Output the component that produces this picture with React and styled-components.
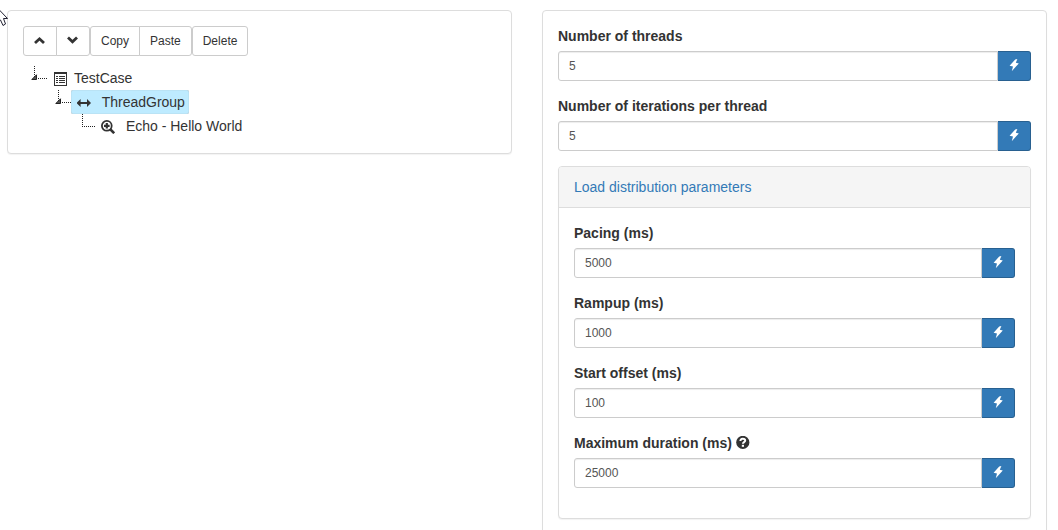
import styled, { createGlobalStyle } from 'styled-components';
import React, { useState } from 'react';

const GlobalStyle = createGlobalStyle`
  * {
    box-sizing: border-box;
  }
  body {
    margin: 0;
    background-color: #fff;
    color: #333;
    font-family: 'Liberation Sans', Arial, sans-serif;
    font-size: 14px;
    line-height: 20px;
  }
`;

const Page = styled.main`
  display: grid;
  grid-template-columns: 1fr 1fr;
  align-items: start;
  gap: 30px;
  padding: 10px 11px 10px 7px;
`;
const Panel = styled.section`
  background-color: #fff;
  border: 1px solid #ddd;
  border-radius: 4px;
  box-shadow: 0 1px 1px rgba(0, 0, 0, 0.05);
`;
const PanelHeading = styled.div`
  background-color: #f5f5f5;
  border-bottom: 1px solid #ddd;
  border-radius: 3px 3px 0 0;
  padding: 10px 15px;
`;
const PanelLink = styled.a`
  color: #337ab7;
  text-decoration: none;
`;
const PanelBody = styled.div`
  padding: 15px;
`;

const Toolbar = styled.div`
  display: flex;
  margin-bottom: 10px;
`;
const ButtonGroup = styled.div`
  display: flex;
`;
const Button = styled.button`
  display: flex;
  align-items: center;
  justify-content: center;
  height: 30px;
  padding: 5px 10px;
  background-color: #fff;
  border: 1px solid #ccc;
  color: #333;
  cursor: pointer;
  font-family: inherit;
  font-size: 12px;
  line-height: 18px;
  &:first-child {
    border-radius: 3px 0 0 3px;
  }
  &:last-child {
    border-radius: 0 3px 3px 0;
  }
  &:only-child {
    border-radius: 3px;
  }
  & + & {
    margin-left: -1px;
  }
`;

const Tree = styled.ul`
  list-style: none;
  margin: 0;
  padding: 0;
`;
const SubTree = styled(Tree)`
  margin-left: 24px;
`;
const TreeRow = styled.div`
  display: flex;
  height: 24px;
`;
const TreeAnchor = styled.a`
  display: flex;
  align-items: center;
  padding: 0 4px 0 1px;
  background-color: ${({ $selected }) => ($selected ? '#beebff' : '#fff')};
  box-shadow: ${({ $selected }) =>
    $selected ? 'inset 0 0 1px #999' : 'none'};
  border-radius: ${({ $selected }) => ($selected ? '2px' : '0')};
  color: #333;
  line-height: 24px;
  text-decoration: none;
  white-space: pre;
`;
const NodeIcon = styled.span`
  display: flex;
  align-items: center;
  justify-content: center;
  width: 24px;
  height: 24px;
  padding-top: 2px;
  margin-right: 2px;
`;

const FormGroup = styled.div`
  margin-bottom: 15px;
`;
const Label = styled.label`
  display: flex;
  align-items: center;
  gap: 4px;
  margin-bottom: 5px;
  font-weight: bold;
`;
const InputGroup = styled.div`
  display: flex;
`;
const Input = styled.input`
  flex: 1;
  min-width: 0;
  height: 30px;
  padding: 5px 10px;
  background-color: #fff;
  border: 1px solid #ccc;
  border-radius: 3px 0 0 3px;
  box-shadow: inset 0 1px 1px rgba(0, 0, 0, 0.075);
  color: #555;
  font-family: inherit;
  font-size: 12px;
  line-height: 18px;
`;
const FlashButton = styled(Button)`
  && {
    padding-bottom: 7px;
    background-color: #337ab7;
    border-color: #286090;
    border-left: 0;
    border-radius: 0 3px 3px 0;
    color: #fff;
  }
`;
const Pointer = styled.svg`
  position: absolute;
  top: 0;
  left: 0;
  pointer-events: none;
`;

function ChevronIcon({ down }) {
  return (
    <svg width='12' height='12' viewBox='0 0 12 12' aria-hidden='true'>
      <path
        d={down ? 'M1 2.6L5.5 6.8L10 2.6' : 'M1 8L5.5 3.8L10 8'}
        fill='none'
        stroke='currentColor'
        strokeWidth='2.8'
      />
    </svg>
  );
}

function FlashIcon() {
  return (
    <svg width='12' height='12' viewBox='0 0 12 12' aria-hidden='true'>
      <path
        d='M7.2 0.6L9.4 0L7.8 3.8L10.8 4.4L3.8 12.2L5 7.6L1.6 6.8Z'
        fill='currentColor'
      />
    </svg>
  );
}

function ListIcon() {
  return (
    <svg
      width='14'
      height='14'
      viewBox='0 0 14 14'
      shapeRendering='crispEdges'
      aria-hidden='true'
    >
      <path
        fill='currentColor'
        fillRule='evenodd'
        d='M1 0H14V14H1ZM2 2V13H13V2Z'
      />
      <path
        d='M3 4.5H5M6 4.5H12M3 6.5H5M6 6.5H12M3 8.5H5M6 8.5H12M3 10.5H5M6 10.5H12'
        stroke='currentColor'
      />
    </svg>
  );
}

function ArrowsIcon() {
  return (
    <svg width='14' height='14' viewBox='0 0 14 14' aria-hidden='true'>
      <path
        fill='currentColor'
        d='M-0.4 7L3.6 3V6H10V3L14 7L10 11V8H3.6V11Z'
      />
    </svg>
  );
}

function ZoomIcon() {
  return (
    <svg width='14' height='14' viewBox='0 0 14 14' aria-hidden='true'>
      <circle
        cx='5.8'
        cy='5.8'
        r='4.9'
        fill='none'
        stroke='currentColor'
        strokeWidth='1.8'
      />
      <path d='M9 9L13.2 13.2' stroke='currentColor' strokeWidth='2.6' />
      <path
        d='M5.8 3V8.6M3 5.8H8.6'
        stroke='currentColor'
        strokeWidth='2.2'
      />
    </svg>
  );
}

function QuestionIcon() {
  return (
    <svg width='14' height='14' viewBox='0 1 14 14' aria-hidden='true'>
      <circle cx='6.8' cy='7.4' r='6.6' fill='currentColor' />
      <path
        d='M4.4 6C4.4 3 9.2 3 9.2 5.5C9.2 7.2 6.9 7 6.9 8.8'
        fill='none'
        stroke='#fff'
        strokeWidth='2'
      />
      <path d='M5.8 9.8H8V11.8H5.8Z' fill='#fff' />
    </svg>
  );
}

// dotted connector, with the open marker for nodes that have children
function Connector({ open }) {
  return (
    <svg width='24' height='24' viewBox='0 0 24 24' aria-hidden='true'>
      <path
        d='M11.5 0V12M11 12.5H24'
        fill='none'
        stroke='#222'
        strokeDasharray='1 1'
      />
      {open && (
        <path d='M13.5 8.8V13.5H8.8Z' fill='#555' stroke='#222' />
      )}
    </svg>
  );
}

function TreeNode({ label, icon, selected, children }) {
  return (
    <li>
      <TreeRow>
        <Connector open={Boolean(children)} />
        <TreeAnchor href='#node' $selected={selected}>
          <NodeIcon>{icon}</NodeIcon>
          {label}
        </TreeAnchor>
      </TreeRow>
      {children && <SubTree>{children}</SubTree>}
    </li>
  );
}

function Field({ name, label, value, onChange, help }) {
  return (
    <FormGroup>
      <Label htmlFor={name}>
        {label}
        {help && <QuestionIcon />}
      </Label>
      <InputGroup>
        <Input
          type='text'
          id={name}
          name={name}
          value={value}
          onChange={onChange}
        />
        <FlashButton type='button' aria-label={`${label} expression`}>
          <FlashIcon />
        </FlashButton>
      </InputGroup>
    </FormGroup>
  );
}

const mainFields = [
  { name: 'threads', label: 'Number of threads' },
  { name: 'iterations', label: 'Number of iterations per thread' },
];
const loadFields = [
  { name: 'pacing', label: 'Pacing (ms)' },
  { name: 'rampup', label: 'Rampup (ms)' },
  { name: 'startOffset', label: 'Start offset (ms)' },
  { name: 'maxDuration', label: 'Maximum duration (ms)', help: true },
];

export default function App() {
  const [values, setValues] = useState({
    threads: '5',
    iterations: '5',
    pacing: '5000',
    rampup: '1000',
    startOffset: '100',
    maxDuration: '25000',
  });

  function handleChange(e) {
    const { name, value } = e.target;
    setValues((prev) => ({ ...prev, [name]: value }));
  }

  function renderField(field) {
    return (
      <Field
        key={field.name}
        {...field}
        value={values[field.name]}
        onChange={handleChange}
      />
    );
  }

  return (
    <>
      <GlobalStyle />
      <Page>
        <Panel>
          <PanelBody>
            <Toolbar>
              <ButtonGroup>
                <Button type='button' aria-label='Move up'>
                  <ChevronIcon />
                </Button>
                <Button type='button' aria-label='Move down'>
                  <ChevronIcon down />
                </Button>
              </ButtonGroup>
              <ButtonGroup>
                <Button type='button'>Copy</Button>
                <Button type='button'>Paste</Button>
              </ButtonGroup>
              <ButtonGroup>
                <Button type='button'>Delete</Button>
              </ButtonGroup>
            </Toolbar>
            <Tree>
              <TreeNode label='TestCase' icon={<ListIcon />}>
                <TreeNode label=' ThreadGroup' icon={<ArrowsIcon />} selected>
                  <TreeNode label=' Echo - Hello World' icon={<ZoomIcon />} />
                </TreeNode>
              </TreeNode>
            </Tree>
          </PanelBody>
        </Panel>
        <Panel>
          <PanelBody>
            {mainFields.map(renderField)}
            <Panel>
              <PanelHeading>
                <PanelLink href='#load'>Load distribution parameters</PanelLink>
              </PanelHeading>
              <PanelBody>{loadFields.map(renderField)}</PanelBody>
            </Panel>
          </PanelBody>
        </Panel>
      </Page>
      <Pointer width='9' height='28' viewBox='0 0 9 28' aria-hidden='true'>
        <path
          d='M-3 7.5L7.5 18.5H3.5L5.5 24L3 25.5L0.5 20L-3 23'
          fill='#fff'
          stroke='#223'
        />
      </Pointer>
    </>
  );
}
